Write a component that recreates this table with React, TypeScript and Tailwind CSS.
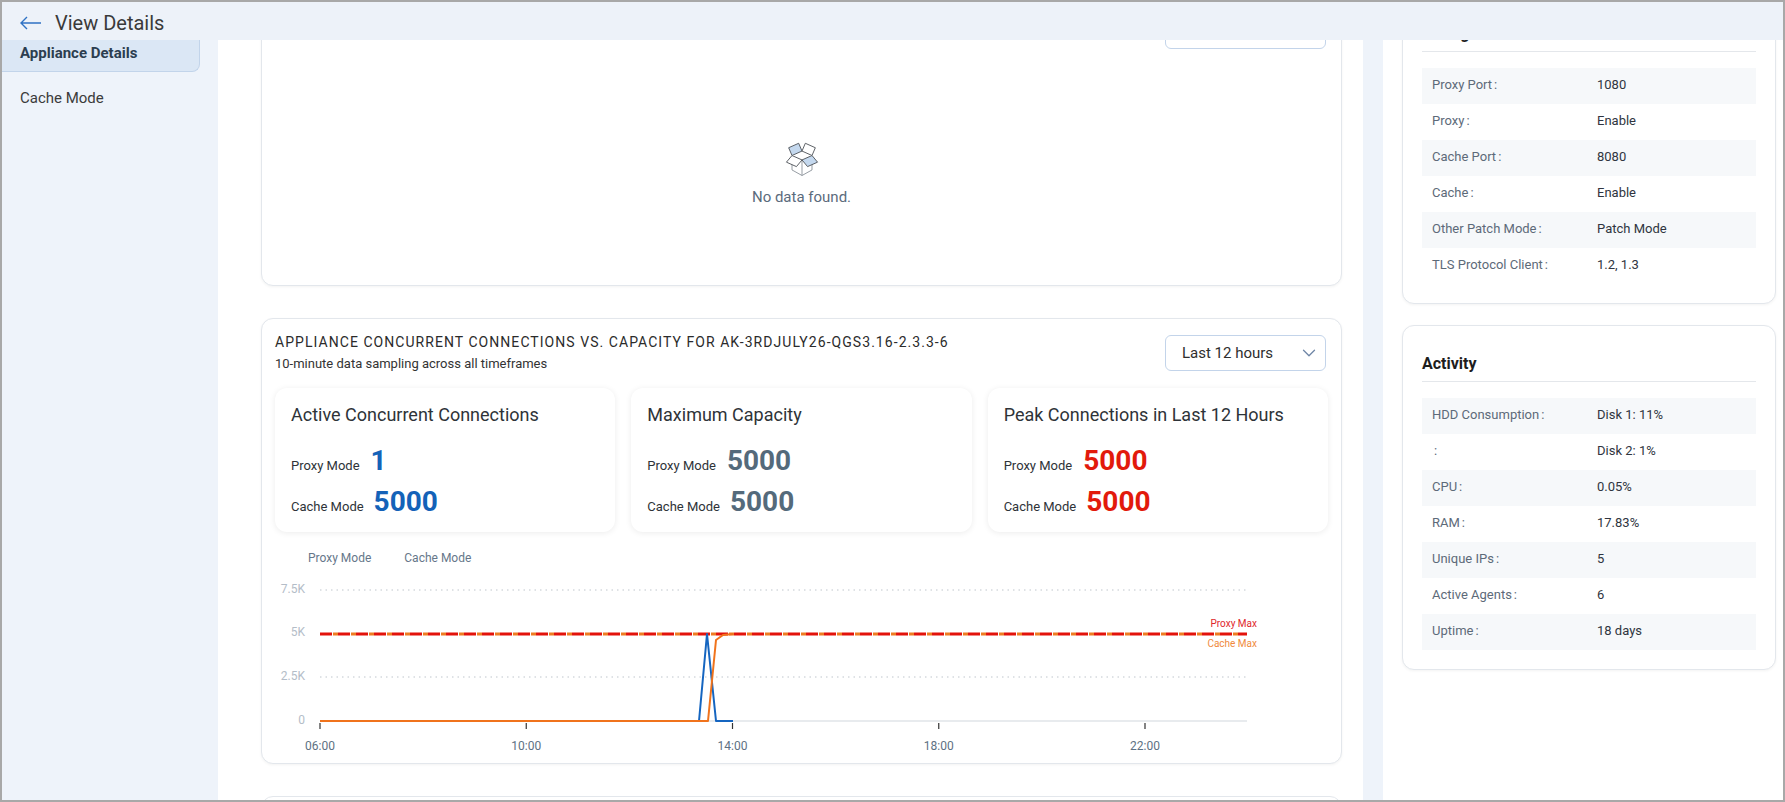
import { ChevronDown } from 'lucide-react';

// ── Data ──────────────────────────────────────────────────────────────────────

const CONFIG_ROWS: [string, string][] = [
  ['Proxy Port', '1080'],
  ['Proxy', 'Enable'],
  ['Cache Port', '8080'],
  ['Cache', 'Enable'],
  ['Other Patch Mode', 'Patch Mode'],
  ['TLS Protocol Client', '1.2, 1.3'],
];

const ACTIVITY_ROWS: [string, string][] = [
  ['HDD Consumption', 'Disk 1: 11%'],
  ['', 'Disk 2: 1%'],
  ['CPU', '0.05%'],
  ['RAM', '17.83%'],
  ['Unique IPs', '5'],
  ['Active Agents', '6'],
  ['Uptime', '18 days'],
];

const STATS = [
  { title: 'Active Concurrent Connections', proxy: '1', cache: '5000', color: 'text-[#1462b8]' },
  { title: 'Maximum Capacity', proxy: '5000', cache: '5000', color: 'text-[#546a7b]' },
  { title: 'Peak Connections in Last 12 Hours', proxy: '5000', cache: '5000', color: 'text-[#e21a0c]' },
];

// ── Small pieces ──────────────────────────────────────────────────────────────

function Dropdown() {
  return (
    <div className="w-[161px] h-[36px] rounded-[6px] border border-[#c3d4ea] bg-white flex items-center justify-between pl-[16px] pr-[5px] text-[15px] text-[#2e2e2e]">
      <span>Last 12 hours</span>
      <ChevronDown size={22} strokeWidth={1.4} color="#6f86a6" />
    </div>
  );
}

function EmptyBoxIcon() {
  return (
    <svg width="40" height="37" viewBox="0 0 36 33" fill="none" stroke="#4a4f55" strokeWidth="0.8" strokeLinejoin="round">
      <path d="M9 12 L18 8 L15 1 L6 5 Z" fill="#c4d8ee" />
      <path d="M18 8 L27 12 L30 5 L21 1 Z" fill="#fff" />
      <path d="M9 12 V25 L18 30 L27 25 V12" fill="#fff" stroke="#8a9098" />
      <path d="M18 16 V30" stroke="#8a9098" />
      <path d="M9 12 L18 16 L13 22 L4 18 Z" fill="#fff" />
      <path d="M18 16 L27 12 L32 18 L23 22 Z" fill="#c4d8ee" />
    </svg>
  );
}

function InfoCard({ title, rows }: { title: string; rows: [string, string][] }) {
  return (
    <div className="rounded-[12px] border border-[#e3e7ec] bg-white px-[19px] pt-[26px] pb-[19px] shadow-[0_1px_3px_rgba(0,0,0,0.05)]">
      <div className="h-[30px] border-b border-[#e4e7eb] text-[16px] font-bold leading-[24px] text-[#1d1d1d]">{title}</div>
      <div className="mt-[16px]">
        {rows.map(([label, value], i) => (
          <div
            key={i}
            className={`flex items-center h-[36px] pl-[10px] pb-[2px] text-[13px] ${i % 2 === 0 ? 'bg-[#f6f8fa]' : ''}`}
          >
            <div className="w-[165px] text-[#5d6a79]">
              {label}
              <span className="ml-[2px]">:</span>
            </div>
            <div className="text-[#2f3540]">{value}</div>
          </div>
        ))}
      </div>
    </div>
  );
}

function StatCard({ title, proxy, cache, color }: (typeof STATS)[number]) {
  return (
    <div className="h-[144px] rounded-[12px] bg-white shadow-[0_1px_6px_rgba(0,0,0,0.08)] pl-[16px] pt-[15px]">
      <div className="text-[18px] leading-[24px] text-[#2e3338]">{title}</div>
      <div className="mt-[16px] flex items-baseline h-[36px]">
        <span className="text-[13px] text-[#2e3338]">Proxy Mode</span>
        <span className={`ml-[11px] text-[28px] font-bold leading-[36px] ${color}`}>{proxy}</span>
      </div>
      <div className="mt-[5px] flex items-baseline h-[36px]">
        <span className="text-[13px] text-[#2e3338]">Cache Mode</span>
        <span className={`ml-[10px] text-[28px] font-bold leading-[36px] ${color}`}>{cache}</span>
      </div>
    </div>
  );
}

// ── Chart ─────────────────────────────────────────────────────────────────────

const X0 = 45;
const X1 = 972;
const Y_LEVELS: [string, number][] = [
  ['7.5K', 24],
  ['5K', 67],
  ['2.5K', 111],
  ['0', 155],
];
const X_TICKS = ['06:00', '10:00', '14:00', '18:00', '22:00'];

function ConnectionsChart() {
  const blue = '45,155 424,155 432,68 441,155 458,155';
  const orange = '45,155 433,155 441,74 448,69 458,68';
  return (
    <svg width="1051" height="196" viewBox="0 0 1051 196" className="block">
      {Y_LEVELS.map(([label, y]) => (
        <text key={label} x={30} y={y} textAnchor="end" dominantBaseline="middle" fontSize="12" fill="#b4bdc8">
          {label}
        </text>
      ))}
      <line x1={X0} x2={X1} y1={24} y2={24} stroke="#bfc5cc" strokeDasharray="1.5 4" />
      <line x1={X0} x2={X1} y1={111} y2={111} stroke="#bfc5cc" strokeDasharray="1.5 4" />
      <line x1={X0} x2={X1} y1={155} y2={155} stroke="#e1e4e8" strokeWidth="1.5" />
      {X_TICKS.map((t, i) => {
        const x = X0 + i * 206.25;
        return (
          <g key={t}>
            <line x1={x} x2={x} y1={157} y2={163} stroke="#333" strokeWidth="1.2" />
            <text x={x} y={181} textAnchor="middle" dominantBaseline="middle" fontSize="12" fill="#5e7183">
              {t}
            </text>
          </g>
        );
      })}
      {/* capacity lines */}
      <line x1={X0} x2={X1} y1={68} y2={68} stroke="#e3120b" strokeWidth="3" strokeDasharray="12 6" />
      <line x1={X0} x2={X1} y1={68} y2={68} stroke="#ee7d22" strokeWidth="3" strokeDasharray="5 13" strokeDashoffset="-13" />
      <text x={982} y={61} textAnchor="end" fontSize="10" fill="#e0262b">Proxy Max</text>
      <text x={982} y={81} textAnchor="end" fontSize="10" fill="#f08a3c">Cache Max</text>
      {/* series */}
      <polyline points={blue} fill="none" stroke="#1565c0" strokeWidth="2" strokeLinejoin="round" />
      <polyline points={orange} fill="none" stroke="#f0731c" strokeWidth="2" strokeLinejoin="round" />
    </svg>
  );
}

// ── Page ──────────────────────────────────────────────────────────────────────

export default function App() {
  return (
    <div className="w-[1785px] h-[802px] border-2 border-[#a8a8a8] bg-[#eef3fa] flex flex-col overflow-hidden [font-family:Roboto,'Liberation_Sans',sans-serif] text-[#333]">
      <header className="h-[38px] shrink-0 flex items-center pl-[18px] pt-[4px] bg-[#edf2f9]">
        <svg width="22" height="14" viewBox="0 0 22 14" fill="none" stroke="#2f72c4" strokeWidth="1.4">
          <path d="M1 7H21M7 1L1 7L7 13" />
        </svg>
        <span className="ml-[13px] text-[20px] leading-none text-[#3a3a3a]">View Details</span>
      </header>

      <div className="flex flex-1 min-h-0">
        {/* Sidebar */}
        <aside className="w-[216px] shrink-0">
          <div className="w-[198px] h-[32px] bg-[#dbe7f5] border-r border-b border-[#c2d4ea] rounded-br-[8px] flex items-center pl-[18px] pb-[5px] text-[15px] font-bold text-[#2c3e50]">
            Appliance Details
          </div>
          <div className="pl-[18px] pt-[16px] text-[15px] leading-[20px] text-[#3b3b3b]">Cache Mode</div>
        </aside>

        {/* Main column */}
        <main className="w-[1145px] shrink-0 bg-white overflow-hidden">
          <div className="-mt-[44px] pl-[43px] pr-[21px] flex flex-col gap-[32px]">
            <section className="h-[290px] rounded-[12px] border border-[#e3e7ec] bg-white shadow-[0_1px_3px_rgba(0,0,0,0.05)] flex flex-col">
              <div className="flex justify-end pt-[16px] pr-[15px]">
                <Dropdown />
              </div>
              <div className="mt-[93px] flex flex-col items-center">
                <EmptyBoxIcon />
                <div className="mt-[8px] text-[15px] leading-[20px] text-[#5b6b7c]">No data found.</div>
              </div>
            </section>

            <section className="h-[446px] rounded-[12px] border border-[#e3e7ec] bg-white shadow-[0_1px_3px_rgba(0,0,0,0.05)] px-[13px]">
              <div className="flex justify-between">
                <div className="pt-[13px]">
                  <div className="text-[14px] leading-[20px] tracking-[1.05px] text-[#2b2b2b]">
                    APPLIANCE CONCURRENT CONNECTIONS VS. CAPACITY FOR AK-3RDJULY26-QGS3.16-2.3.3-6
                  </div>
                  <div className="mt-[3px] text-[13px] leading-[18px] text-[#333]">
                    10-minute data sampling across all timeframes
                  </div>
                </div>
                <div className="mt-[16px] pr-[2px]">
                  <Dropdown />
                </div>
              </div>
              <div className="mt-[15px] grid grid-cols-3 gap-[16px]">
                {STATS.map((s) => (
                  <StatCard key={s.title} {...s} />
                ))}
              </div>
              <div className="mt-[18px] flex gap-[33px] pl-[33px] text-[12px] leading-[16px] text-[#66778a]">
                <span>Proxy Mode</span>
                <span>Cache Mode</span>
              </div>
              <ConnectionsChart />
            </section>

            <section className="h-[300px] rounded-[12px] border border-[#e3e7ec] bg-white" />
          </div>
        </main>

        {/* Right column */}
        <aside className="ml-[20px] w-[400px] shrink-0 bg-white overflow-hidden">
          <div className="-mt-[45px] pl-[19px] pr-[7px] flex flex-col gap-[21px]">
            <InfoCard title="Configuration" rows={CONFIG_ROWS} />
            <InfoCard title="Activity" rows={ACTIVITY_ROWS} />
          </div>
        </aside>
      </div>
    </div>
  );
}
